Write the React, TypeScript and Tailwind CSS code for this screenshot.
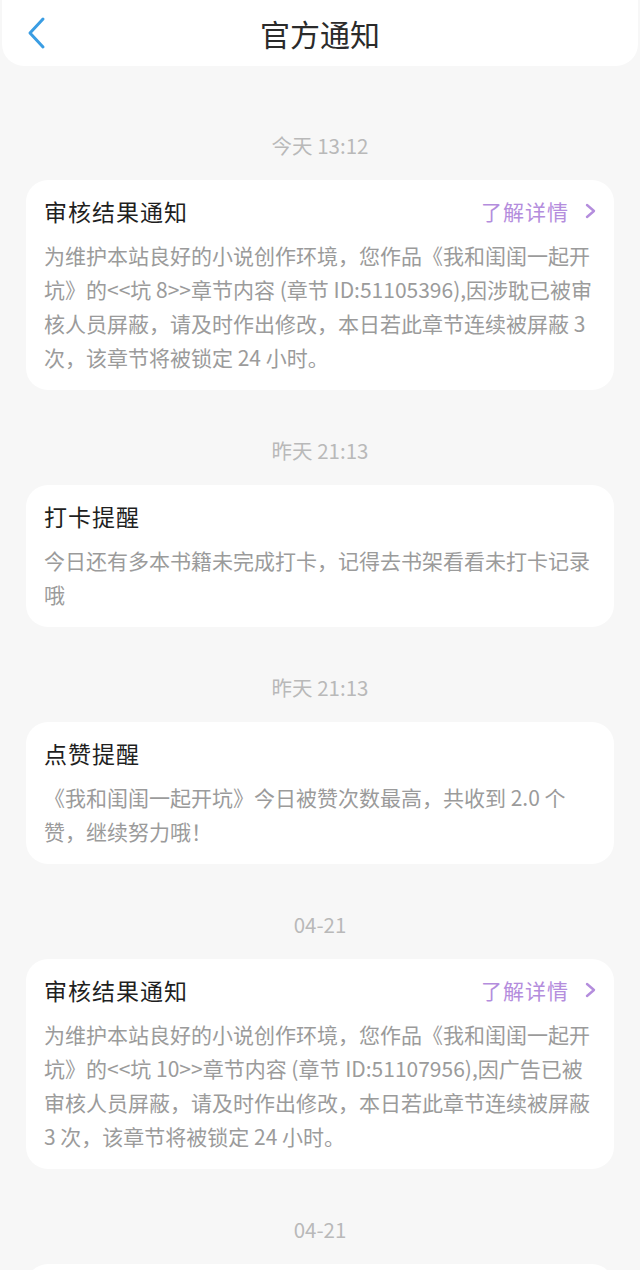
import { Fragment } from "react";

type Notice = {
  time: string;
  title?: string;
  link?: boolean;
  lines: string[];
};

const notices: Notice[] = [
  {
    time: "今天 13:12",
    title: "审核结果通知",
    link: true,
    lines: [
      "为维护本站良好的小说创作环境，您作品《我和闺闺一起开",
      "坑》的<<坑 8>>章节内容 (章节 ID:51105396),因涉耽已被审",
      "核人员屏蔽，请及时作出修改，本日若此章节连续被屏蔽 3",
      "次，该章节将被锁定 24 小时。",
    ],
  },
  {
    time: "昨天 21:13",
    title: "打卡提醒",
    lines: ["今日还有多本书籍未完成打卡，记得去书架看看未打卡记录", "哦"],
  },
  {
    time: "昨天 21:13",
    title: "点赞提醒",
    lines: ["《我和闺闺一起开坑》今日被赞次数最高，共收到 2.0 个", "赞，继续努力哦！"],
  },
  {
    time: "04-21",
    title: "审核结果通知",
    link: true,
    lines: [
      "为维护本站良好的小说创作环境，您作品《我和闺闺一起开",
      "坑》的<<坑 10>>章节内容 (章节 ID:51107956),因广告已被",
      "审核人员屏蔽，请及时作出修改，本日若此章节连续被屏蔽",
      "3 次，该章节将被锁定 24 小时。",
    ],
  },
  // only the top edge of this one shows
  { time: "04-21", lines: [] },
];

const font = { fontFamily: '"Noto Sans CJK SC", "Noto Sans", sans-serif' };

const NoticeCard = ({ n }: { n: Notice }) => {
  if (!n.title) return <div className="mx-[26px] h-[160px] rounded-[22px] bg-white" />;
  return (
    <div className="mx-[26px] rounded-[22px] bg-white px-[18px] pt-[16px] pb-[16px]">
      <div className="flex h-[30px] items-center justify-between">
        <span className="text-[23px] leading-[30px] tracking-[1px] text-[#1f1f1f]">{n.title}</span>
        {n.link && (
          <span className="flex items-center gap-[16px] text-[21px] leading-[30px] tracking-[1px] text-[#b48ddd]">
            了解详情
            <svg width="11" height="16" viewBox="0 0 11 16" fill="none">
              <polyline points="2,2 9,8 2,14" stroke="#b48ddd" strokeWidth="2.4" strokeLinecap="round" strokeLinejoin="round" />
            </svg>
          </span>
        )}
      </div>
      <div className="mt-[12px] text-[21px] leading-[34px] text-[#9b9b9b]">
        {n.lines.map((l, i) => (
          <div key={i} className="whitespace-nowrap">
            {l}
          </div>
        ))}
      </div>
    </div>
  );
};

export default function App() {
  return (
    <div className="h-[1270px] overflow-hidden bg-[#f7f7f7]" style={font}>
      {/* header */}
      <div className="relative mx-[2px] flex h-[66px] items-center justify-center rounded-b-[22px] bg-white">
        <svg className="absolute left-[24px] top-[16px]" width="22" height="34" viewBox="0 0 22 34" fill="none">
          <polyline points="17,3 4,17 17,31" stroke="#3a9de3" strokeWidth="3" strokeLinecap="round" strokeLinejoin="round" />
        </svg>
        <span className="text-[30px] leading-none text-[#2b2b2b]">官方通知</span>
      </div>

      <div className="pt-[19px]">
        {notices.map((n, i) => (
          <Fragment key={i}>
            <div className="pt-[48px] pb-[23px] text-center text-[20.5px] leading-[24px] text-[#b9b9b9]">{n.time}</div>
            <NoticeCard n={n} />
          </Fragment>
        ))}
      </div>
    </div>
  );
}
